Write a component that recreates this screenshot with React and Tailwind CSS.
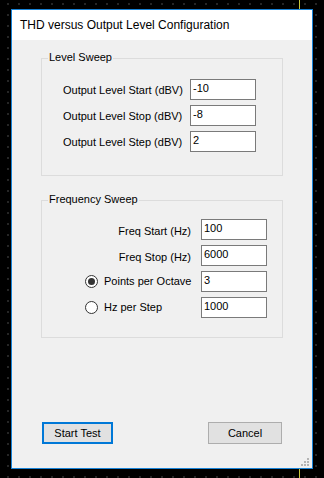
import React from 'react';

const font = { fontFamily: '"Liberation Sans", Arial, sans-serif' };

const TextBox = ({ value }) => (
  <div className="w-[66px] h-[21px] bg-white border border-[#7a7a7a] pl-[2px] text-[11px] leading-[17px] text-black">
    {value}
  </div>
);

const Radio = ({ checked }) => (
  <span className="w-[13px] h-[13px] rounded-full border border-[#333333] bg-white flex items-center justify-center">
    {checked && <span className="w-[7px] h-[7px] rounded-full bg-[#333333]" />}
  </span>
);

const GroupBox = ({ title, className, children }) => (
  <div className={`relative border border-[#dcdcdc] ${className}`}>
    <span className="absolute top-[-8px] left-[6px] px-[1px] bg-[#f0f0f0] text-[11px] leading-[13px]">
      {title}
    </span>
    {children}
  </div>
);

const ResizeGrip = () => (
  <svg className="absolute right-[2px] bottom-[1px]" width="11" height="11" viewBox="0 0 11 11">
    <g fill="#b4b4b4">
      <rect x="8" y="2" width="2" height="2" />
      <rect x="5" y="5" width="2" height="2" />
      <rect x="8" y="5" width="2" height="2" />
      <rect x="2" y="8" width="2" height="2" />
      <rect x="5" y="8" width="2" height="2" />
      <rect x="8" y="8" width="2" height="2" />
    </g>
  </svg>
);

export default function App() {
  return (
    <div
      className="relative w-[324px] h-[478px] bg-black pl-[11px] pt-[9px] overflow-hidden bg-[radial-gradient(circle,#9a9a9a_0.7px,transparent_1px)] bg-[length:11px_11px] bg-[position:2.5px_-1.5px]"
      style={font}
    >
      <div className="absolute left-[299px] top-0 w-px h-[9px] bg-[#c8c83c]" />
      <div className="absolute left-[299px] top-[469px] w-px h-[9px] bg-[#c8c83c]" />

      <div className="relative w-[302px] h-[460px] border border-[#1883d7] flex flex-col bg-[#f0f0f0] text-black">
        <div className="h-[30px] bg-white flex items-center pl-[8px] text-[12px]">
          THD versus Output Level Configuration
        </div>

        <div className="flex-1 flex flex-col pl-[29px]">
          <GroupBox title="Level Sweep" className="mt-[18px] w-[242px] h-[118px] pt-[20px] pl-[21px]">
            <div className="flex flex-col gap-[5px]">
              {[
                ['Output Level Start (dBV)', '-10'],
                ['Output Level Stop (dBV)', '-8'],
                ['Output Level Step (dBV)', '2'],
              ].map(([label, value]) => (
                <div key={label} className="flex items-center">
                  <span className="w-[127px] text-[11px] pt-[1px]">{label}</span>
                  <TextBox value={value} />
                </div>
              ))}
            </div>
          </GroupBox>

          <GroupBox title="Frequency Sweep" className="mt-[24px] w-[242px] h-[138px] pt-[18px]">
            <div className="flex flex-col gap-[5px]">
              {[
                ['Freq Start (Hz)', '100'],
                ['Freq Stop (Hz)', '6000'],
              ].map(([label, value]) => (
                <div key={label} className="flex items-center">
                  <span className="w-[159px] pr-[10px] text-right text-[11px] pt-[4px]">{label}</span>
                  <TextBox value={value} />
                </div>
              ))}
              {[
                ['Points per Octave', '3', true],
                ['Hz per Step', '1000', false],
              ].map(([label, value, checked]) => (
                <div key={label} className="flex items-center">
                  <div className="w-[159px] pl-[43px] flex items-center gap-[6px] text-[11px]">
                    <Radio checked={checked} />
                    <span>{label}</span>
                  </div>
                  <TextBox value={value} />
                </div>
              ))}
            </div>
          </GroupBox>

          <div className="mt-auto mb-[24px] flex items-center">
            <button className="ml-[1px] w-[71px] h-[22px] border-2 border-[#0078d7] bg-[#e1e1e1] text-[11px]">
              Start Test
            </button>
            <button className="ml-[95px] w-[74px] h-[22px] border border-[#adadad] bg-[#e1e1e1] text-[11px]">
              Cancel
            </button>
          </div>
        </div>

        <ResizeGrip />
      </div>
    </div>
  );
}
